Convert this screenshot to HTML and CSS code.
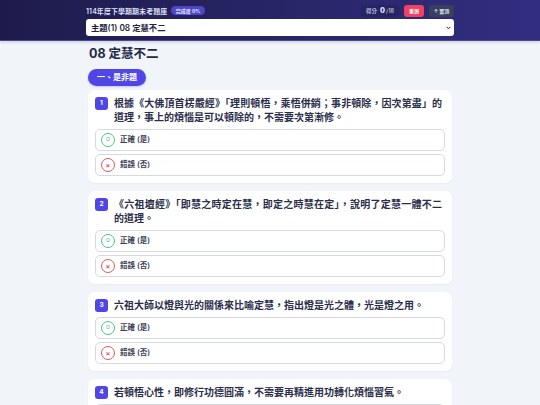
FILE: index.html
```html
<!DOCTYPE html>
<html lang="zh-Hant">
<head>
<meta charset="utf-8">
<title>114年度下學期期末考題庫</title>
<link rel="stylesheet" href="styles.css">
</head>
<body>
<header class="topbar">
  <div class="wrap">
    <div class="top-row">
      <div class="brand"><span class="brand-title">114年度下學期期末考題庫</span><span class="progress">完成度 0%</span></div>
      <div class="actions">
        <div class="score">得分 <b>0</b><span>/18</span></div>
        <button class="btn btn-red">重測</button>
        <button class="btn btn-dark">↑ 置頂</button>
      </div>
    </div>
    <select class="topic"><option>主題(1) 08 定慧不二</option></select>
  </div>
</header>
<main class="wrap">
  <h1 class="page-title">08 定慧不二</h1>
  <div class="pill">一、是非題</div>
  <section class="card">
    <div class="q"><span class="num">1</span><p>根據《大佛頂首楞嚴經》「理則頓悟，乘悟併銷；事非頓除，因次第盡」的道理，事上的煩惱是可以頓除的，不需要次第漸修。</p></div>
    <div class="opt"><span class="mark ok">○</span><span class="opt-text">正確 (是)</span></div>
    <div class="opt"><span class="mark no">×</span><span class="opt-text">錯誤 (否)</span></div>
  </section>
  <section class="card">
    <div class="q"><span class="num">2</span><p>《六祖壇經》「即慧之時定在慧，即定之時慧在定」，說明了定慧一體不二的道理。</p></div>
    <div class="opt"><span class="mark ok">○</span><span class="opt-text">正確 (是)</span></div>
    <div class="opt"><span class="mark no">×</span><span class="opt-text">錯誤 (否)</span></div>
  </section>
  <section class="card">
    <div class="q"><span class="num">3</span><p>六祖大師以燈與光的關係來比喻定慧，指出燈是光之體，光是燈之用。</p></div>
    <div class="opt"><span class="mark ok">○</span><span class="opt-text">正確 (是)</span></div>
    <div class="opt"><span class="mark no">×</span><span class="opt-text">錯誤 (否)</span></div>
  </section>
  <section class="card">
    <div class="q"><span class="num">4</span><p>若頓悟心性，即修行功德圓滿，不需要再精進用功轉化煩惱習氣。</p></div>
    <div class="opt"><span class="mark ok">○</span><span class="opt-text">正確 (是)</span></div>
    <div class="opt"><span class="mark no">×</span><span class="opt-text">錯誤 (否)</span></div>
  </section>
</main>
</body>
</html>
```
FILE: styles.css
```css
* { box-sizing: border-box; }
html, body { margin: 0; height: 100%; overflow: hidden; }
body {
  background: #f1f4f9;
  color: #1f2440;
  font-family: Inter, "Noto Sans CJK TC", sans-serif;
}
.wrap { width: 368px; margin: 0 auto; }
.topbar {
  height: 41px;
  padding-top: 4px;
  background: linear-gradient(90deg, #1e1b4b, #312e81);
  border-bottom: 1px solid #4a4a8c;
  box-shadow: 0 1px 3px rgba(30, 27, 75, .2);
}
.top-row { display: flex; justify-content: space-between; align-items: center; height: 13px; margin-bottom: 2px; }
.brand { display: flex; align-items: center; gap: 4px; }
.brand-title { font-size: 6.9px; font-weight: 600; color: #dfe1f5; letter-spacing: .15px; }
.progress { background: #4f46c5; color: #e4e6ff; font-size: 5px; font-weight: 700; padding: 2.5px 4.5px; border-radius: 5px; line-height: 4px; }
.actions { display: flex; align-items: center; gap: 5px; }
.score { height: 12px; padding: 0 5px; display: flex; align-items: center; gap: 2px; background: #272463; border-radius: 3px; color: #b8bbdb; font-size: 5.5px; font-weight: 600; }
.score b { color: #d8daf5; font-size: 7px; margin-left: 1px; }
.score span { font-size: 5.5px; margin-left: -1px; }
.btn { height: 12px; border: 0; border-radius: 3px; padding: 0 5px; font: 600 5px Inter, "Noto Sans CJK TC", sans-serif; color: #fff; }
.btn-red { background: #f43f5e; width: 20px; padding: 0; }
.btn-dark { background: #3a3f5e; color: #dfe1f0; width: 25px; padding: 0; }
.topic {
  display: block; width: 100%; height: 17px; padding: 0 12px 0 5px; border: 0; border-radius: 3px;
  appearance: none;
  background: #fff url("data:image/svg+xml,%3Csvg xmlns='http://www.w3.org/2000/svg' width='5' height='4' viewBox='0 0 5 4'%3E%3Cpath d='M.6.8 2.5 2.8 4.4.8' fill='none' stroke='%23222' stroke-width='1'/%3E%3C/svg%3E") no-repeat right 3px center;
  color: #1f2440;
  font: 600 8.3px Inter, "Noto Sans CJK TC", sans-serif;
}
main.wrap { padding: 4px 2px 0; }
.page-title { margin: 0 0 6px 1px; font-size: 12.5px; line-height: 18px; font-weight: 700; color: #242848; }
.pill { width: 58px; height: 17px; margin-bottom: 4px; border-radius: 9px; background: #4f46e5; color: #fff; font-size: 8px; font-weight: 700; line-height: 17px; text-align: center; box-shadow: 0 1px 2px rgba(79, 70, 229, .25); }
.card { background: #fff; border-radius: 7px; padding: 6px 7px 7px; margin-bottom: 8px; box-shadow: 0 1px 2px rgba(30, 40, 80, .04); }
.q { display: flex; gap: 6px; margin-bottom: 5px; }
.num { flex: none; width: 13px; height: 13px; margin-top: 1px; border-radius: 3px; background: #4f46e5; color: #fff; font-size: 6.5px; font-weight: 700; line-height: 13px; text-align: center; }
.q p { margin: 0; font-size: 10px; line-height: 14px; font-weight: 600; color: #2a2e4a; text-align: justify; padding-right: 3px; }
.opt { display: flex; align-items: center; gap: 5px; height: 22px; margin-bottom: 3px; padding: 0 5px; border: 1px solid #d5d9e2; border-radius: 5px; background: #fff; font-size: 7.5px; font-weight: 600; color: #3c4056; }
.opt:last-child { margin-bottom: 0; }
.opt-text { margin-bottom: 3px; }
.mark { flex: none; width: 14px; height: 14px; border-radius: 50%; border: 1px solid; display: flex; align-items: center; justify-content: center; line-height: 1; font-weight: 700; }
.mark.ok { color: #4cc38a; font-size: 4.5px; }
.mark.no { color: #dc5a60; font-size: 7px; }
```
